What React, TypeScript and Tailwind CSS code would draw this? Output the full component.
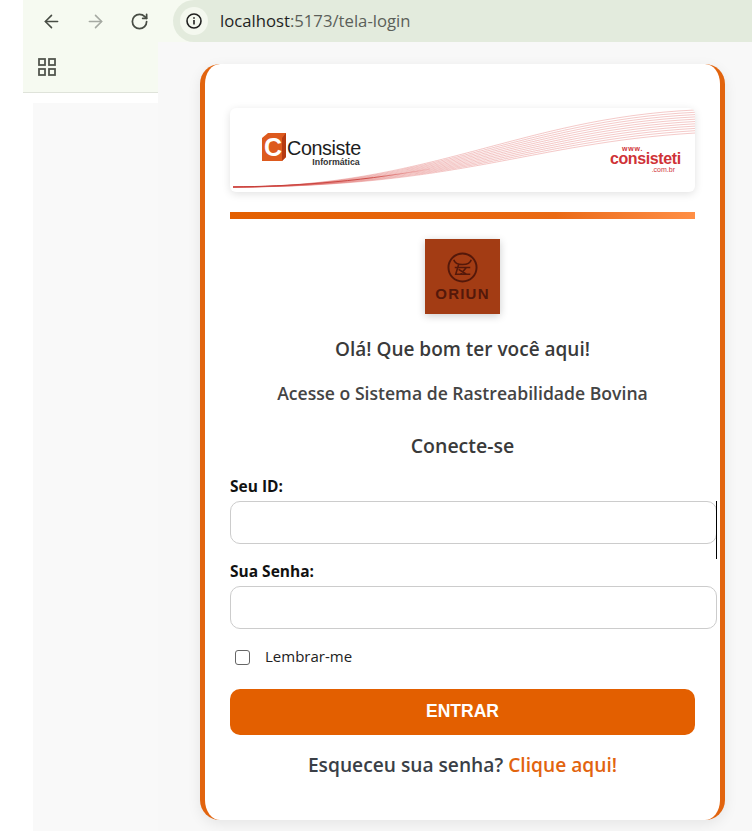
import { ArrowLeft, ArrowRight, RotateCw } from "lucide-react";

const sans = "font-['Open_Sans','Noto_Sans',sans-serif]";

type Curve = number[];
const waveTop: Curve = [3, 79, 200, 79, 290, 10, 465, 2];
const waveBottom: Curve = [3, 79, 230, 79, 300, 35, 465, 25];

const mix = (a: Curve, b: Curve, k: number) => a.map((v, i) => v + (b[i] - v) * k);

function pointAt(c: Curve, t: number) {
  const s = 1 - t;
  const w = [s * s * s, 3 * s * s * t, 3 * s * t * t, t * t * t];
  return {
    x: w[0] * c[0] + w[1] * c[2] + w[2] * c[4] + w[3] * c[6],
    y: w[0] * c[1] + w[1] * c[3] + w[2] * c[5] + w[3] * c[7],
  };
}

// fan of thin lines for the banner wave
const waveLines = Array.from({ length: 11 }, (_, i) => {
  const c = mix(waveTop, waveBottom, i / 10);
  return `M${c[0]} ${c[1]} C${c[2]} ${c[3]} ${c[4]} ${c[5]} ${c[6]} ${c[7]}`;
});
const ribs = Array.from({ length: 60 }, (_, i) => {
  const t = 0.34 + i * 0.0065;
  const a = pointAt(waveTop, t);
  const b = pointAt(waveBottom, t);
  return `M${a.x} ${a.y} L${b.x} ${b.y}`;
});

function Banner() {
  return (
    <div className="relative h-[84px] w-full overflow-hidden rounded-md bg-white shadow-[0_2px_8px_rgba(0,0,0,0.12)]">
      <svg viewBox="0 0 465 84" className="absolute inset-0 h-full w-full" fill="none">
        <defs>
          <linearGradient id="baseLine" x1="0" y1="0" x2="1" y2="0">
            <stop offset="0" stopColor="#c23a34" />
            <stop offset="0.7" stopColor="#c9423c" />
            <stop offset="1" stopColor="#e88080" stopOpacity="0.2" />
          </linearGradient>
        </defs>
        {waveLines.map((d, i) => (
          <path key={i} d={d} stroke="#dd5553" strokeWidth="0.45" opacity="0.7" />
        ))}
        {ribs.map((d, i) => (
          <path key={i} d={d} stroke="#e9908e" strokeWidth="0.3" opacity={0.65 - i * 0.008} />
        ))}
        <path d="M3 79 C60 78 120 75 200 61" stroke="url(#baseLine)" strokeWidth="0.9" />
      </svg>
      <div className="absolute left-[32px] top-[25px] flex items-start">
        <svg viewBox="0 0 24 28" className="h-[28px] w-[24px]">
          <path d="M0 5 L6 0 H24 V24 L20 28 H0 Z" fill="#dd5a1e" />
          <path d="M20 28 L24 24 V0 L20 5 Z" fill="#b53a10" />
          <text x="11" y="23" textAnchor="middle" fontFamily="Liberation Sans" fontWeight="700" fontSize="25" fill="#ffffff">C</text>
        </svg>
        <div className="ml-[1px] mt-[5px] flex flex-col items-end">
          <span className="font-['Liberation_Sans',sans-serif] text-[19.8px] leading-[20px] tracking-[-0.4px] text-[#1d1d1d]">Consiste</span>
          <span className="mr-[1px] font-['Liberation_Sans',sans-serif] text-[8.8px] font-bold leading-[9px] text-[#333]">Informática</span>
        </div>
      </div>
      <div className="absolute right-[15px] top-[38px] flex w-[70px] flex-col font-['Liberation_Sans',sans-serif] text-[#cf3337]">
        <span className="ml-[12px] text-[7px] font-bold leading-[6px] tracking-[0.8px]">www.</span>
        <span className="text-[16px] font-bold leading-[14px] tracking-[-0.4px]">consisteti</span>
        <span className="ml-auto mr-[5px] text-[7px] leading-[7px]">.com.br</span>
      </div>
    </div>
  );
}

function OriunLogo() {
  return (
    <div className="flex h-[75px] w-[75px] flex-col items-center bg-[#a33c14] pt-[13px] shadow-[0_2px_8px_rgba(0,0,0,0.2)]">
      <svg viewBox="0 0 32 32" className="h-[31px] w-[31px]" fill="none" stroke="#54180a" strokeWidth="2">
        <circle cx="16" cy="16" r="14.5" />
        <path d="M7 8c1 4 5 5 9 5s8-1 9-5M8 16h16M12 13l-3 10h15M20 16l-6 7M12 18l8 5" strokeWidth="1.6" />
      </svg>
      <span className="mt-[2px] font-['Liberation_Sans',sans-serif] text-[15px] font-bold leading-[17px] tracking-[1.2px] text-[#54180a]">ORIUN</span>
    </div>
  );
}

function Field({ label, cursor }: { label: string; cursor?: boolean }) {
  return (
    <div className="relative flex flex-col">
      <label className={`${sans} text-[15.5px] font-bold leading-[19px] text-[#111]`}>{label}</label>
      <input className="mt-[5px] h-[43px] w-[487px] rounded-[10px] border border-[#cccccc] bg-white" />
      {cursor && <div className="absolute left-[486px] top-[24px] h-[58px] w-px bg-black" />}
    </div>
  );
}

export default function App() {
  return (
    <div className="relative h-[831px] w-[752px] overflow-hidden bg-white">
      {/* browser chrome */}
      <div className="ml-[23px] flex h-[42px] items-center bg-[#f6faf1]">
        <ArrowLeft className="ml-[18px] h-[21px] w-[21px] text-[#474c44]" strokeWidth={1.8} />
        <ArrowRight className="ml-[23px] h-[21px] w-[21px] text-[#a5a9a2]" strokeWidth={1.8} />
        <RotateCw className="ml-[24px] h-[19px] w-[19px] text-[#474c44]" strokeWidth={2.2} />
        <div className="ml-[24px] flex h-[42px] flex-1 items-center rounded-l-[21px] bg-[#e3ebdd] pl-[7px]">
          <div className="flex h-[28px] w-[28px] items-center justify-center rounded-full bg-[#f4f8ef]">
            <svg viewBox="0 0 16 16" className="h-[16px] w-[16px]" fill="none" stroke="#1f1f1f" strokeWidth="1.6">
              <circle cx="8" cy="8" r="7" />
              <path d="M8 7v4.6" />
              <path d="M8 4.2v1.6" />
            </svg>
          </div>
          <span className="ml-[12px] font-['Open_Sans',sans-serif] text-[16.7px] text-[#1f1f1f]">
            localhost<span className="text-[#5b5f59]">:5173/tela-login</span>
          </span>
        </div>
      </div>
      <div className="ml-[23px] flex h-[51px] items-center border-b border-[#dfe3da] bg-[#f6faf1] pl-[15px]">
        <svg viewBox="0 0 18 18" className="h-[18px] w-[18px]" fill="none" stroke="#53574f" strokeWidth="1.8">
          <rect x="1" y="1" width="6" height="6" />
          <rect x="11" y="1" width="6" height="6" />
          <rect x="1" y="11" width="6" height="6" />
          <rect x="11" y="11" width="6" height="6" />
        </svg>
      </div>
      <div className="ml-[33px] mt-[10px] h-[728px] bg-[#f9f9f9]" />

      {/* page window, sits over the chrome */}
      <div className="absolute left-[158px] top-[42px] h-[789px] w-[594px] bg-[#f8f8f8]">
        <div className="ml-[42px] mt-[22px] flex h-[756px] w-[525px] flex-col rounded-[20px] border-x-[5px] border-[#e2640e] bg-white px-[25px] pt-[44px] shadow-[0_4px_14px_rgba(0,0,0,0.08)]">
          <Banner />
          <div className="mt-[20px] h-[7px] w-full bg-gradient-to-r from-[#e35f00] via-[#ea6a14] via-70% to-[#ff8f45]" />
          <div className="mt-[20px] flex justify-center">
            <OriunLogo />
          </div>
          <p className={`${sans} mt-[22px] text-center text-[19px] font-semibold leading-[26px] text-[#3a3a3a]`}>
            Olá! Que bom ter você aqui!
          </p>
          <p className={`${sans} mt-[19px] text-center text-[17.6px] font-semibold leading-[24px] text-[#444]`}>
            Acesse o Sistema de Rastreabilidade Bovina
          </p>
          <p className={`${sans} mt-[28px] text-center text-[19.5px] font-semibold leading-[26px] text-[#3a3a3a]`}>
            Conecte-se
          </p>
          <div className="mt-[18px] flex flex-col gap-[18px]">
            <Field label="Seu ID:" cursor />
            <Field label="Sua Senha:" />
          </div>
          <div className="ml-[5px] mt-[18px] flex h-[20px] items-center">
            <span className="h-[15px] w-[15px] rounded-[3px] border border-[#666] bg-white" />
            <span className={`${sans} ml-[15px] self-start text-[15px] leading-[18px] text-[#222]`}>Lembrar-me</span>
          </div>
          <button className="mt-[22px] h-[46px] w-full rounded-[10px] bg-[#e35f00] pb-[2px] font-['Liberation_Sans',sans-serif] text-[17.5px] font-bold text-white">
            ENTRAR
          </button>
          <p className={`${sans} mt-[17px] text-center text-[19.2px] font-semibold leading-[26px] text-[#3a3f47]`}>
            Esqueceu sua senha? <span className="text-[#e2640e]">Clique aqui!</span>
          </p>
        </div>
      </div>
    </div>
  );
}
